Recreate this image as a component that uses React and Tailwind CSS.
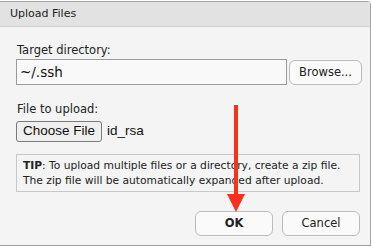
export default function App() {
  const lucida = { fontFamily: '"DejaVu Sans", "Noto Sans", sans-serif' };
  return (
    <div className="w-[371px] h-[247px] bg-white pt-px overflow-hidden relative">
      <div className="h-[245px] border-t border-r border-b border-[#a3a3a3] rounded-tr-[4px] bg-[#f3f4f3] flex flex-col" style={lucida}>
        <div className="h-[25px] bg-[#e2e2e2] border-b border-[#cfcfcf] flex items-center pl-[10px] text-[11px] text-[#222] shrink-0">
          Upload Files
        </div>
        <div className="pl-[16px] pr-[8px] flex flex-col">
          <div className="mt-[15px] h-[16px] leading-[16px] pl-px text-[11.5px] text-[#222]">Target directory:</div>
          <div className="mt-[1px] flex items-start">
            <div className="w-[271px] h-[26px] border border-[#9a9a9a] bg-[#f9f9f9] flex items-center pl-[3px] text-[13.5px] text-[#111]">~/.ssh</div>
            <div className="ml-[2px] mt-px w-[73px] h-[25px] border border-[#bcbcbc] rounded-[6px] bg-[#fafafa] flex items-center justify-center text-[11.5px] text-[#222]">Browse...</div>
          </div>
          <div className="mt-[16px] h-[16px] leading-[16px] pl-px text-[11.5px] text-[#222]">File to upload:</div>
          <div className="mt-[4px] flex items-center" style={{ fontFamily: '"Liberation Sans", Arial, sans-serif' }}>
            <div className="w-[86px] h-[21px] border border-[#7a7a7a] rounded-[3px] bg-[#efefef] flex items-center justify-center text-[13.5px] text-[#111]">Choose File</div>
            <div className="ml-[5px] text-[13.5px] text-[#111]">id_rsa</div>
          </div>
          <div className="mt-[12px] w-[344px] h-[38px] border border-[#c8c8c8] flex flex-col justify-center pl-[6px] text-[10.7px] leading-[15px] text-[#222] whitespace-nowrap">
            <div><span className="font-bold">TIP</span>: To upload multiple files or a directory, create a zip file.</div>
            <div>The zip file will be automatically expanded after upload.</div>
          </div>
          <div className="mt-[19px] flex justify-end pr-[2px] gap-[9px]">
            <div className="w-[78px] h-[25px] border border-[#bcbcbc] rounded-[6px] bg-[#fafafa] flex items-center justify-center text-[11.5px] font-bold text-[#222]">OK</div>
            <div className="w-[78px] h-[25px] border border-[#bcbcbc] rounded-[6px] bg-[#fafafa] flex items-center justify-center text-[11.5px] text-[#222]">Cancel</div>
          </div>
        </div>
      </div>
      <svg className="absolute left-0 top-0" width="371" height="247" viewBox="0 0 371 247">
        <rect x="234" y="105" width="4" height="90" fill="#f5321c" />
        <polygon points="227,194 245,194 236,212" fill="#f5321c" />
      </svg>
    </div>
  );
}
